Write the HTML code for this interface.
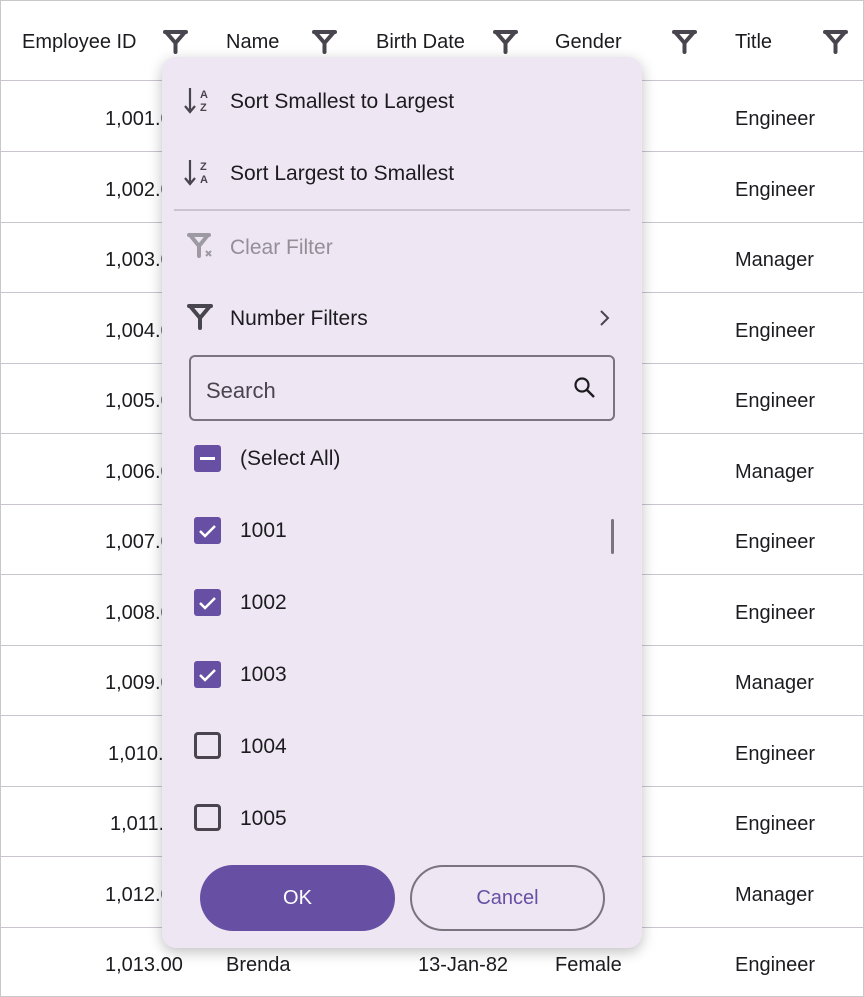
<!DOCTYPE html>
<html><head><meta charset="utf-8">
<style>
*{margin:0;padding:0;box-sizing:border-box}
body{width:864px;height:997px;position:relative;background:#fff;font-family:"Liberation Sans",sans-serif;color:#1c1b1f;overflow:hidden}
.frame{position:absolute;left:0;top:0;width:864px;height:997px;border:1px solid #c8c8c8}
.t{position:absolute;font-size:20px;white-space:nowrap;line-height:24px}
.hl{position:absolute;left:1px;width:862px;height:1px;background:#cac4d0}
.fi{position:absolute;top:29px}
.pop{position:absolute;left:162px;top:57px;width:480px;height:891px;background:#eee7f3;border-radius:14px;box-shadow:0 4px 14px rgba(0,0,0,.25)}
.pop .t{font-size:21px}
.cb{position:absolute;left:32px;width:27px;height:27px;border-radius:3px}
.on{background:#6750a4}
.off{border:2.5px solid #49454f}
</style></head><body>
<div class="frame"></div>
<div class="t" style="left:22px;top:30px">Employee ID</div>
<div class="t" style="left:226px;top:30px">Name</div>
<div class="t" style="left:376px;top:30px">Birth Date</div>
<div class="t" style="left:555px;top:30px">Gender</div>
<div class="t" style="left:735px;top:30px">Title</div>
<svg class="fi" style="left:163px" width="25" height="25" viewBox="0 0 25 25"><path d="M2 3H23M3 3L12.5 14M22 3L12.5 14V23" fill="none" stroke="#49454f" stroke-width="4" stroke-linecap="round" stroke-linejoin="round"/></svg>
<svg class="fi" style="left:312px" width="25" height="25" viewBox="0 0 25 25"><path d="M2 3H23M3 3L12.5 14M22 3L12.5 14V23" fill="none" stroke="#49454f" stroke-width="4" stroke-linecap="round" stroke-linejoin="round"/></svg>
<svg class="fi" style="left:493px" width="25" height="25" viewBox="0 0 25 25"><path d="M2 3H23M3 3L12.5 14M22 3L12.5 14V23" fill="none" stroke="#49454f" stroke-width="4" stroke-linecap="round" stroke-linejoin="round"/></svg>
<svg class="fi" style="left:672px" width="25" height="25" viewBox="0 0 25 25"><path d="M2 3H23M3 3L12.5 14M22 3L12.5 14V23" fill="none" stroke="#49454f" stroke-width="4" stroke-linecap="round" stroke-linejoin="round"/></svg>
<svg class="fi" style="left:823px" width="25" height="25" viewBox="0 0 25 25"><path d="M2 3H23M3 3L12.5 14M22 3L12.5 14V23" fill="none" stroke="#49454f" stroke-width="4" stroke-linecap="round" stroke-linejoin="round"/></svg>
<div class="hl" style="top:80px"></div><div class="hl" style="top:151px"></div><div class="hl" style="top:222px"></div><div class="hl" style="top:292px"></div><div class="hl" style="top:363px"></div><div class="hl" style="top:433px"></div><div class="hl" style="top:504px"></div><div class="hl" style="top:574px"></div><div class="hl" style="top:645px"></div><div class="hl" style="top:715px"></div><div class="hl" style="top:786px"></div><div class="hl" style="top:856px"></div><div class="hl" style="top:927px"></div>
<div class="t" style="left:105px;top:107px">1,001.00</div><div class="t" style="left:735px;top:107px">Engineer</div>
<div class="t" style="left:105px;top:178px">1,002.00</div><div class="t" style="left:735px;top:178px">Engineer</div>
<div class="t" style="left:105px;top:248px">1,003.00</div><div class="t" style="left:735px;top:248px">Manager</div>
<div class="t" style="left:105px;top:319px">1,004.00</div><div class="t" style="left:735px;top:319px">Engineer</div>
<div class="t" style="left:105px;top:389px">1,005.00</div><div class="t" style="left:735px;top:389px">Engineer</div>
<div class="t" style="left:105px;top:460px">1,006.00</div><div class="t" style="left:735px;top:460px">Manager</div>
<div class="t" style="left:105px;top:530px">1,007.00</div><div class="t" style="left:735px;top:530px">Engineer</div>
<div class="t" style="left:105px;top:601px">1,008.00</div><div class="t" style="left:735px;top:601px">Engineer</div>
<div class="t" style="left:105px;top:671px">1,009.00</div><div class="t" style="left:735px;top:671px">Manager</div>
<div class="t" style="left:108px;top:742px">1,010.00</div><div class="t" style="left:735px;top:742px">Engineer</div>
<div class="t" style="left:110px;top:812px">1,011.00</div><div class="t" style="left:735px;top:812px">Engineer</div>
<div class="t" style="left:105px;top:883px">1,012.00</div><div class="t" style="left:735px;top:883px">Manager</div>
<div class="t" style="left:105px;top:953px">1,013.00</div><div class="t" style="left:226px;top:953px">Brenda</div><div class="t" style="left:418px;top:953px">13-Jan-82</div><div class="t" style="left:555px;top:953px">Female</div><div class="t" style="left:735px;top:953px">Engineer</div>
<div class="pop">
 <svg style="position:absolute;left:22px;top:28px" width="32" height="32" viewBox="0 0 32 32"><path d="M6 3v24M1 21l5 6 5-6" fill="none" stroke="#49454f" stroke-width="2.2"/><text x="16" y="13" font-size="11" font-weight="bold" fill="#49454f" font-family="Liberation Sans">A</text><text x="16" y="26" font-size="11" font-weight="bold" fill="#49454f" font-family="Liberation Sans">Z</text></svg>
 <div class="t" style="left:68px;top:33px">Sort Smallest to Largest</div>
 <svg style="position:absolute;left:22px;top:100px" width="32" height="32" viewBox="0 0 32 32"><path d="M6 3v24M1 21l5 6 5-6" fill="none" stroke="#49454f" stroke-width="2.2"/><text x="16" y="13" font-size="11" font-weight="bold" fill="#49454f" font-family="Liberation Sans">Z</text><text x="16" y="26" font-size="11" font-weight="bold" fill="#49454f" font-family="Liberation Sans">A</text></svg>
 <div class="t" style="left:68px;top:105px">Sort Largest to Smallest</div>
 <div style="position:absolute;left:12px;top:152px;width:456px;height:2px;background:#cac4d0"></div>
 <svg style="position:absolute;left:25px;top:175px" width="30" height="30" viewBox="0 0 30 30"><path d="M2 3H22M3 3L12 14M21 3L12 14V24" fill="none" stroke="#9e9aa3" stroke-width="4" stroke-linecap="round" stroke-linejoin="round"/><path d="M19 19l5 5M24 19l-5 5" stroke="#9e9aa3" stroke-width="2"/></svg>
 <div class="t" style="left:68px;top:179px;color:#938f99">Clear Filter</div>
 <svg style="position:absolute;left:25px;top:246px" width="28" height="28" viewBox="0 0 28 28"><path d="M2 3H24M3 3L13 15M23 3L13 15V25" fill="none" stroke="#49454f" stroke-width="4" stroke-linecap="round" stroke-linejoin="round"/></svg>
 <div class="t" style="left:68px;top:250px">Number Filters</div>
 <svg style="position:absolute;left:436px;top:251px" width="14" height="20" viewBox="0 0 14 20"><path d="M3 3l7 7-7 7" fill="none" stroke="#49454f" stroke-width="2"/></svg>
 <div style="position:absolute;left:27px;top:298px;width:426px;height:66px;border:2px solid #79747e;border-radius:6px"></div>
 <div class="t" style="left:44px;top:322px;font-size:22px;color:#49454f">Search</div>
 <svg style="position:absolute;left:410px;top:318px" width="26" height="26" viewBox="0 0 26 26"><circle cx="10" cy="10" r="6.5" fill="none" stroke="#1c1b1f" stroke-width="2.2"/><path d="M15 15l7 7" stroke="#1c1b1f" stroke-width="2.4"/></svg>
 <div class="cb on" style="top:388px"><div style="position:absolute;left:6px;top:12px;width:15px;height:2.5px;background:#fff"></div></div>
 <div class="t" style="left:78px;top:390px">(Select All)</div>
 <div class="cb on" style="top:460px"><svg width="27" height="27" viewBox="0 0 27 27"><path d="M6 14l5 5 10-10" fill="none" stroke="#fff" stroke-width="2.5"/></svg></div>
 <div class="t" style="left:78px;top:462px">1001</div>
 <div style="position:absolute;left:449px;top:462px;width:3px;height:35px;background:#79747e;border-radius:2px"></div>
 <div class="cb on" style="top:532px"><svg width="27" height="27" viewBox="0 0 27 27"><path d="M6 14l5 5 10-10" fill="none" stroke="#fff" stroke-width="2.5"/></svg></div>
 <div class="t" style="left:78px;top:534px">1002</div>
 <div class="cb on" style="top:604px"><svg width="27" height="27" viewBox="0 0 27 27"><path d="M6 14l5 5 10-10" fill="none" stroke="#fff" stroke-width="2.5"/></svg></div>
 <div class="t" style="left:78px;top:606px">1003</div>
 <div class="cb off" style="top:675px;border-radius:4px;border-width:3px"></div>
 <div class="t" style="left:78px;top:678px">1004</div>
 <div class="cb off" style="top:747px;border-radius:4px;border-width:3px"></div>
 <div class="t" style="left:78px;top:750px">1005</div>
 <div style="position:absolute;left:38px;top:808px;width:195px;height:66px;border-radius:33px;background:#6750a4;color:#fff;font-size:20px;text-align:center;line-height:66px">OK</div>
 <div style="position:absolute;left:248px;top:808px;width:195px;height:66px;border-radius:33px;border:2px solid #79747e;color:#6750a4;font-size:20px;text-align:center;line-height:62px">Cancel</div>
</div>
</body></html>
